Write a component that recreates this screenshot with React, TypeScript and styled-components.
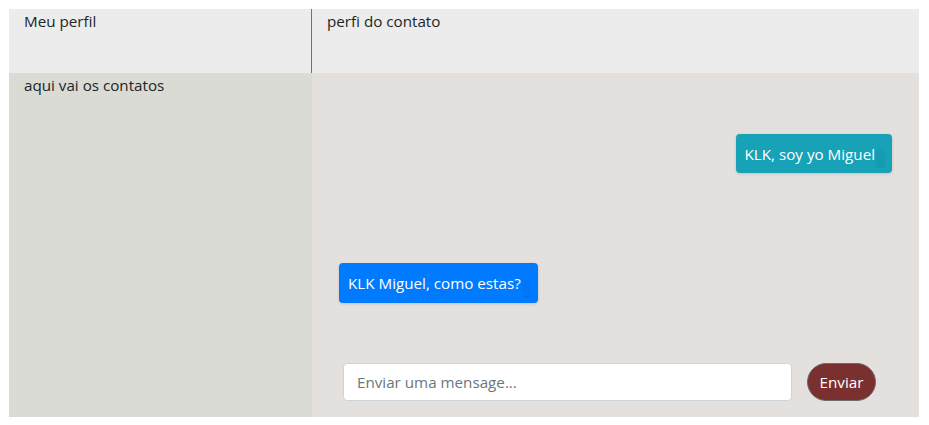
import React from "react";
import styled, { createGlobalStyle } from "styled-components";

const GlobalStyle = createGlobalStyle`
  html, body { margin: 0; padding: 0; background: #ffffff; }
  body {
    font-family: "Open Sans", "Noto Sans", Arial, sans-serif;
    font-size: 15.2px;
    line-height: 24px;
    color: #212529;
  }
  * { box-sizing: border-box; }
`;

const Page = styled.div`
  padding: 9px 10px 8px 9px;
`;

const Frame = styled.div`
  width: 910px;
  height: 408px;
  display: grid;
  grid-template-columns: 303px 1fr;
  grid-template-rows: 64px 1fr;
`;

const HeaderCell = styled.div<{ $divider?: boolean }>`
  background: #ececec;
  padding: 0 15px;
  border-right: ${(p) => (p.$divider ? "1px solid #6c757d" : "none")};
`;

const Contacts = styled.div`
  background: #d9dbd4;
  padding: 0 15px;
`;

const Chat = styled.div`
  background: #e4e0dd;
  padding: 61px 16px 0 14px;
  display: flex;
  flex-direction: column;
`;

const MessageRow = styled.div<{ $mine?: boolean }>`
  display: flex;
  justify-content: ${(p) => (p.$mine ? "flex-end" : "flex-start")};
  padding: ${(p) => (p.$mine ? "0 11px 0 0" : "0 0 0 13px")};
`;

const Bubble = styled.div<{ $tone: string }>`
  display: flex;
  align-items: center;
  height: ${(p) => (p.$tone === "info" ? "39px" : "40px")};
  padding: 0 8px 0 9px;
  background: ${(p) => (p.$tone === "info" ? "#17a2b8" : "#007bff")};
  color: #ffffff;
  border-radius: 4px;
  box-shadow: 0 1px 3px rgba(0, 0, 0, 0.15);
  white-space: nowrap;
`;

const Stamp = styled.span`
  display: inline-block;
  width: 7px;
  height: 17px;
  margin: 8px 0 0 2px;
  border-radius: 2px;
  background: rgba(0, 0, 0, 0.03);
  box-shadow: 0 1px 2px rgba(0, 0, 0, 0.12);
`;

const Divider = styled.hr`
  margin: 29px 0 60px;
  border: 0;
  border-top: 1px solid #dddee2;
  height: 0;
`;

const Composer = styled.form`
  margin-top: 60px;
  display: flex;
  align-items: center;
  gap: 15px;
  padding: 0 27px 0 17px;
`;

const MessageInput = styled.input`
  flex: 1;
  height: 38px;
  padding: 6px 13px;
  font: inherit;
  color: #495057;
  background: #ffffff;
  border: 1px solid #ced4da;
  border-radius: 4px;
  outline: none;
  &::placeholder { color: #6c757d; opacity: 1; }
`;

const SendButton = styled.button`
  width: 69px;
  height: 38px;
  font: inherit;
  color: #ffffff;
  background: #7b3030;
  border: 1px solid #6f6a6a;
  border-radius: 19px;
  padding: 0;
`;

export default function App() {
  return (
    <Page>
      <GlobalStyle />
      <Frame>
        <HeaderCell $divider>Meu perfil</HeaderCell>
        <HeaderCell>perfi do contato</HeaderCell>
        <Contacts>aqui vai os contatos</Contacts>
        <Chat>
          <MessageRow $mine>
            <Bubble $tone="info">
              KLK, soy yo Miguel
              <Stamp />
            </Bubble>
          </MessageRow>
          <Divider />
          <MessageRow>
            <Bubble $tone="primary">
              KLK Miguel, como estas?
              <Stamp />
            </Bubble>
          </MessageRow>
          <Composer onSubmit={(e) => e.preventDefault()}>
            <MessageInput placeholder="Enviar uma mensage..." />
            <SendButton type="submit">Enviar</SendButton>
          </Composer>
        </Chat>
      </Frame>
    </Page>
  );
}
